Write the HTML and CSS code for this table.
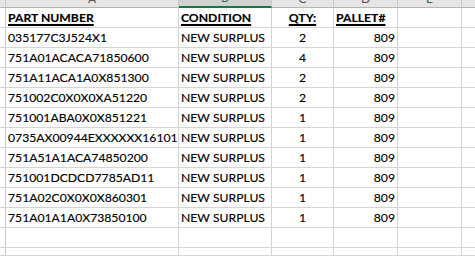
FILE: index.html
```html
<!DOCTYPE html>
<html>
<head>
<meta charset="utf-8">
<link rel="stylesheet" href="styles.css">
</head>
<body>
<div class="sheet">
  <div class="ch corner"></div>
  <div class="ch"><span class="cl">A</span></div>
  <div class="ch sel"><span class="cl">B</span></div>
  <div class="ch"><span class="cl">C</span></div>
  <div class="ch"><span class="cl">D</span></div>
  <div class="ch"><span class="cl">E</span></div>
  <div class="ch last"></div>

  <div class="rh"></div><div class="c hd">PART NUMBER</div><div class="c hd">CONDITION</div><div class="c hd ctr">QTY:</div><div class="c hd">PALLET#</div><div class="c"></div><div class="c last"></div>
  <div class="rh"></div><div class="c">035177C3J524X1</div><div class="c">NEW SURPLUS</div><div class="c ctr">2</div><div class="c rt">809</div><div class="c"></div><div class="c last"></div>
  <div class="rh"></div><div class="c">751A01ACACA71850600</div><div class="c">NEW SURPLUS</div><div class="c ctr">4</div><div class="c rt">809</div><div class="c"></div><div class="c last"></div>
  <div class="rh"></div><div class="c">751A11ACA1A0X851300</div><div class="c">NEW SURPLUS</div><div class="c ctr">2</div><div class="c rt">809</div><div class="c"></div><div class="c last"></div>
  <div class="rh"></div><div class="c">751002C0X0X0XA51220</div><div class="c">NEW SURPLUS</div><div class="c ctr">2</div><div class="c rt">809</div><div class="c"></div><div class="c last"></div>
  <div class="rh"></div><div class="c">751001ABA0X0X851221</div><div class="c">NEW SURPLUS</div><div class="c ctr">1</div><div class="c rt">809</div><div class="c"></div><div class="c last"></div>
  <div class="rh"></div><div class="c">0735AX00944EXXXXXX16101</div><div class="c">NEW SURPLUS</div><div class="c ctr">1</div><div class="c rt">809</div><div class="c"></div><div class="c last"></div>
  <div class="rh"></div><div class="c">751A51A1ACA74850200</div><div class="c">NEW SURPLUS</div><div class="c ctr">1</div><div class="c rt">809</div><div class="c"></div><div class="c last"></div>
  <div class="rh"></div><div class="c">751001DCDCD7785AD11</div><div class="c">NEW SURPLUS</div><div class="c ctr">1</div><div class="c rt">809</div><div class="c"></div><div class="c last"></div>
  <div class="rh"></div><div class="c">751A02C0X0X0X860301</div><div class="c">NEW SURPLUS</div><div class="c ctr">1</div><div class="c rt">809</div><div class="c"></div><div class="c last"></div>
  <div class="rh"></div><div class="c">751A01A1A0X73850100</div><div class="c">NEW SURPLUS</div><div class="c ctr">1</div><div class="c rt">809</div><div class="c"></div><div class="c last"></div>
  <div class="rh"></div><div class="c"></div><div class="c"></div><div class="c"></div><div class="c"></div><div class="c"></div><div class="c last"></div>
  <div class="rh"></div><div class="c"></div><div class="c"></div><div class="c"></div><div class="c"></div><div class="c"></div><div class="c last"></div>
</div>
</body>
</html>
```
FILE: styles.css
```css
html, body {
  margin: 0;
  padding: 0;
  background: #ffffff;
}
.sheet {
  display: grid;
  grid-template-columns: 6px 173px 93px 62px 64px 64px 13px;
  grid-template-rows: 8px repeat(12, 20px);
  width: 475px;
  height: 256px;
  overflow: hidden;
  font-family: Lato, "Liberation Sans", sans-serif;
  font-size: 12.2px;
  color: #000;
}
.ch {
  box-sizing: border-box;
  background: #e6e6e6;
  border-right: 1px solid #c8c8c8;
  border-bottom: 1px solid #b4b4b4;
  overflow: hidden;
  display: flex;
  justify-content: center;
  align-items: flex-end;
}
.ch.sel {
  background: #d2d2d2;
  border-bottom: 2px solid #217346;
}
.ch.last { border-right: none; }
.cl {
  font-family: Lato, sans-serif;
  font-size: 12px;
  color: #555;
  line-height: 12px;
  margin-bottom: 2px;
}
.ch.sel .cl { color: #217346; }
.rh {
  box-sizing: border-box;
  background: #ffffff;
  border-right: 1px solid #c8c8c8;
  border-bottom: 1px solid #d4d4d4;
}
.c {
  box-sizing: border-box;
  border-right: 1px solid #d4d4d4;
  border-bottom: 1px solid #d4d4d4;
  padding: 0 2px 2px 2px;
  white-space: nowrap;
  overflow: visible;
  display: flex;
  align-items: flex-end;
  line-height: 15px;
  -webkit-text-stroke: 0.15px #000;
}
.c.last { border-right: none; }
.c.ctr { justify-content: center; }
.c.rt { justify-content: flex-end; }
.hd {
  font-weight: bold;
  text-decoration: underline;
  text-decoration-thickness: 1.5px;
  text-underline-offset: 2px;
}
```
